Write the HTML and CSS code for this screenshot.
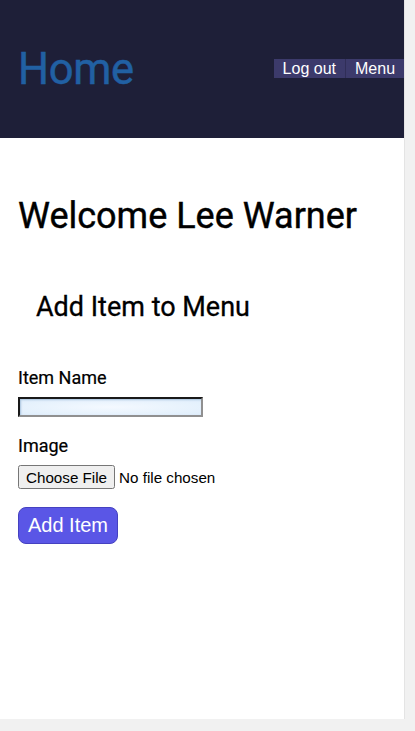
FILE: index.html
```html
<!DOCTYPE html>
<html lang="en">
<head>
<meta charset="utf-8">
<title>Home</title>
<link rel="stylesheet" href="styles.css">
</head>
<body>
<div class="page">
  <header class="header">
    <h1 class="brand">Home</h1>
    <nav class="nav">
      <button class="nav-btn" type="button">Log out</button>
      <button class="nav-btn" type="button">Menu</button>
    </nav>
  </header>
  <main class="main">
    <h2 class="welcome">Welcome Lee Warner</h2>
    <h3 class="form-title">Add Item to Menu</h3>
    <form class="form">
      <label class="label" for="name">Item Name</label>
      <input class="text-input" id="name" type="text">
      <label class="label label-image" for="image">Image</label>
      <input class="file-input" id="image" type="file">
      <button class="submit" type="button">Add Item</button>
    </form>
  </main>
</div>
</body>
</html>
```
FILE: styles.css
```css
html, body {
  margin: 0;
  padding: 0;
}
body {
  background: #f1f1f1;
  font-family: Roboto, "Liberation Sans", sans-serif;
}
.page {
  width: 405px;
  height: 719px;
  background: #ffffff;
  border-right: 1px solid #e4e4e4;
  box-sizing: border-box;
}
.header {
  height: 138px;
  background: #1e1f38;
  display: flex;
  align-items: center;
  justify-content: space-between;
  padding-left: 18px;
}
.brand {
  margin: 0;
  font-family: Roboto, sans-serif;
  font-weight: 400;
  font-size: 43.5px;
  color: #2160a3;
  letter-spacing: -0.3px;
  -webkit-text-stroke: 0.5px #2160a3;
}
.nav {
  display: flex;
  margin-top: -2px;
}
.nav-btn {
  font-family: "Liberation Sans", Arial, sans-serif;
  font-size: 16px;
  color: #ffffff;
  background: #3c3a6b;
  border: none;
  border-right: 1px solid #302e58;
  height: 19px;
  padding: 0 9px;
  line-height: 19px;
}
.nav-btn:last-child {
  border-right: none;
  width: 58px;
  text-align: left;
}
.main {
  padding: 0 18px;
}
.welcome {
  margin: 0;
  padding-top: 56px;
  font-size: 36px;
  font-weight: 400;
  line-height: 44px;
  color: #000;
  -webkit-text-stroke: 0.4px #000;
}
.form-title {
  margin: 0;
  padding-top: 52px;
  padding-left: 18px;
  font-size: 27px;
  font-weight: 400;
  line-height: 34px;
  color: #000;
  -webkit-text-stroke: 0.3px #000;
}
.form {
  display: flex;
  flex-direction: column;
  align-items: flex-start;
  padding-top: 44px;
}
.label {
  font-size: 18px;
  line-height: 20px;
  color: #000;
  -webkit-text-stroke: 0.2px #000;
}
.text-input {
  margin-top: 9px;
  width: 185px;
  height: 20px;
  box-sizing: border-box;
  border: 2px inset #767676;
  border-color: #6e6e6e #909090 #909090 #6e6e6e;
  background: radial-gradient(ellipse at center, #f4f9ff 0%, #dfeefb 100%);
  box-shadow: inset 1px 1px 2px #a9c3dd;
}
.label-image {
  margin-top: 19px;
}
.file-input {
  margin-top: 9px;
  font-family: "Liberation Sans", Arial, sans-serif;
  font-size: 15.2px;
}
.file-input::file-selector-button {
  height: 24px;
  padding: 0 6px;
  margin-right: 4px;
}
.submit {
  margin-top: 18px;
  height: 37px;
  width: 100px;
  padding: 0;
  border: 1px solid #4541c0;
  border-radius: 8px;
  background: #5a56e6;
  color: #ffffff;
  font-family: "Liberation Sans", Arial, sans-serif;
  font-size: 20px;
}
```
